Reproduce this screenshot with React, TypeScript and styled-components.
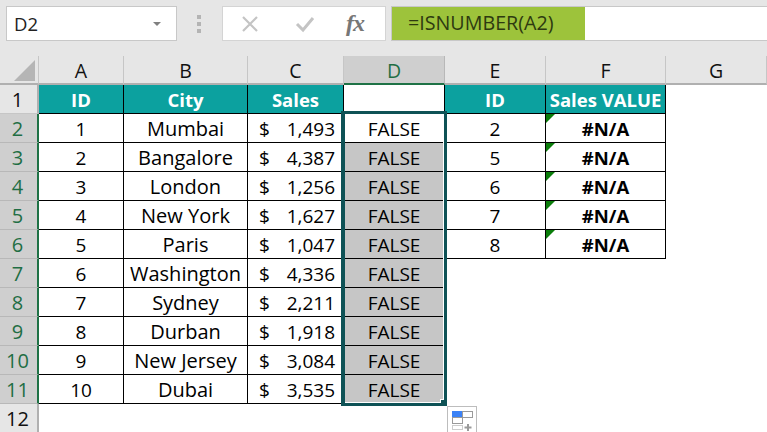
import React from "react";
import styled, { createGlobalStyle } from "styled-components";

const Global = createGlobalStyle`
  html, body { margin: 0; padding: 0; background: #fff; overflow: hidden; }
  #root { width: 767px; height: 432px; overflow: hidden; }
  * { box-sizing: border-box; }
`;
const FONT = `"Open Sans", Lato, "Liberation Sans", sans-serif`;

const Page = styled.div`
  width: 767px; height: 432px; display: flex; flex-direction: column;
  font-family: ${FONT}; color: #000; background: #fff;
`;
const FormulaBar = styled.div`
  height: 56px; flex: none; background: #e6e6e6; display: flex; align-items: flex-start;
  padding-top: 6px; padding-left: 6px;
`;
const NameBox = styled.div`
  width: 171px; height: 35px; background: #fff; border: 1px solid #c8c8c8;
  display: flex; align-items: center; justify-content: space-between;
  padding: 0 15px 0 7px; font-size: 18.5px; color: #222;
`;
const Caret = styled.span`
  width: 0; height: 0; border-left: 4px solid transparent; border-right: 4px solid transparent;
  border-top: 4px solid #808080;
`;
const Grip = styled.div`
  width: 45px; height: 35px; flex: none; display: flex; flex-direction: column; align-items: center;
  justify-content: center; gap: 3px; padding-right: 1px;
`;
const GripDot = styled.span`
  width: 4px; height: 4px; background: #b4b4b4;
`;
const ButtonBox = styled.div`
  width: 164px; height: 35px; flex: none; background: #fff; border: 1px solid #d4d4d4;
  display: flex; align-items: center; padding-left: 18px; gap: 36px;
`;
const FxLabel = styled.span`
  font-family: "Liberation Serif", serif; font-style: italic; font-weight: 700; font-size: 24px; color: #777;
  letter-spacing: -1px; margin-left: -5px;
`;
const FormulaInput = styled.div`
  flex: 1; height: 35px; margin-left: 5px; background: #fff; border: 1px solid #c8c8c8; border-right: none; display: flex;
`;
const FormulaText = styled.div`
  width: 193px; height: 100%; background: #9dc33b; padding-left: 16px; font-size: 19.7px; line-height: 32px; color: #2e3a10;
`;
const Sheet = styled.div`
  position: relative; display: grid; flex: none;
  grid-template-columns: 39px 85px 124px 96px 101px 101px 120px 101px;
  grid-template-rows: 29px repeat(12, 29px);
`;
const Corner = styled.div`
  background: #e6e6e6; border-right: 1px solid #c6c6c6; border-bottom: 2px solid #b0b0b0; position: relative;
`;
const CornerMark = styled.svg`
  position: absolute; right: 3px; bottom: 2px; width: 21px; height: 21px;
`;
const ColHead = styled.div<{ $active?: boolean }>`
  background: ${p => (p.$active ? "#cfcfcf" : "#e6e6e6")};
  border-right: 1px solid ${p => (p.$active ? "#b8b8b8" : "#c6c6c6")};
  border-bottom: 2px solid ${p => (p.$active ? "#1f7246" : "#b0b0b0")};
  color: ${p => (p.$active ? "#1f6e44" : "#111")};
  display: flex; align-items: center; justify-content: center; font-size: 19.5px; padding-top: 2px;
`;
const RowHead = styled.div<{ $active?: boolean }>`
  background: ${p => (p.$active ? "#cfcfcf" : "#e6e6e6")};
  border-right: 2px solid ${p => (p.$active ? "#1f7246" : "#b0b0b0")};
  border-bottom: 1px solid ${p => (p.$active ? "#b8b8b8" : "#c6c6c6")};
  color: ${p => (p.$active ? "#1f6e44" : "#111")};
  display: flex; align-items: center; justify-content: center; font-size: 20px; padding: 1px 2px 0 0;
`;
const Header = styled.div`
  background: #0ca19f; color: #fff; font-weight: 700; font-size: 18.5px;
  border-right: 1px solid #000; border-bottom: 1px solid #000;
  display: flex; align-items: center; justify-content: center; white-space: nowrap;
`;
const Cell = styled.div<{ $grey?: boolean }>`
  position: relative; background: ${p => (p.$grey ? "#c6c6c6" : "#fff")};
  font-size: 19px; padding-top: 1px;
  border-right: 1px solid #000; border-bottom: 1px solid #000;
  display: flex; align-items: center; justify-content: center; white-space: nowrap;
`;
const CityCell = styled(Cell)`
  font-size: 20px;
`;
const ErrorCell = styled(Cell)`
  font-size: 18.5px; font-weight: 700;
`;
const Money = styled(Cell)`
  justify-content: space-between; padding: 1px 8px 0 11px;
`;
const Flag = styled.span`
  position: absolute; left: 0; top: 0; width: 0; height: 0;
  border-top: 9px solid #0a7d0a; border-right: 9px solid transparent;
`;
const Blank = styled.div``;
const Selection = styled.div`
  position: absolute; left: 341px; top: 55px; width: 106px; height: 295px;
  border-style: solid; border-color: #0e5256; border-width: 3px 3px 3px 4px;
  box-shadow: inset -1px -1px 0 #fff; pointer-events: none;
`;
const FillHandle = styled.span`
  position: absolute; right: -1px; bottom: -1px; width: 4px; height: 4px; background: #0e5256;
  box-shadow: -1px -1px 0 #fff;
`;
const PasteOptions = styled.div`
  position: absolute; left: 447px; top: 350px; width: 30px; height: 30px; background: #fff;
  border: 1px solid #bdbdbd; padding: 4px;
`;

const cities = ["Mumbai","Bangalore","London","New York","Paris","Washington","Sydney","Durban","New Jersey","Dubai"];
const sales = ["1,493","4,387","1,256","1,627","1,047","4,336","2,211","1,918","3,084","3,535"];
const lookups = ["2","5","6","7","8"];
const cols = ["A","B","C","D","E","F","G"];

export default function App() {
  return (
    <Page>
      <Global />
      <FormulaBar>
        <NameBox>D2<Caret /></NameBox>
        <Grip><GripDot /><GripDot /><GripDot /></Grip>
        <ButtonBox>
          <svg width="18" height="18" viewBox="0 0 18 18"><path d="M2 2 L16 16 M16 2 L2 16" stroke="#c4c4c4" strokeWidth="2.2" fill="none" /></svg>
          <svg width="20" height="18" viewBox="0 0 20 18"><path d="M2 9 L8 15 L18 3" stroke="#c4c4c4" strokeWidth="3" fill="none" /></svg>
          <FxLabel>fx</FxLabel>
        </ButtonBox>
        <FormulaInput><FormulaText>=ISNUMBER(A2)</FormulaText></FormulaInput>
      </FormulaBar>
      <Sheet>
        <Corner>
          <CornerMark viewBox="0 0 21 21"><path d="M21 0 V21 H0 Z" fill="#b5b5b5" /></CornerMark>
        </Corner>
        {cols.map(c => <ColHead key={c} $active={c === "D"}>{c}</ColHead>)}

        <RowHead>1</RowHead>
        <Header>ID</Header><Header>City</Header><Header>Sales</Header>
        <Cell />
        <Header>ID</Header><Header>Sales VALUE</Header>
        <Blank />

        {cities.map((city, i) => (
          <React.Fragment key={city}>
            <RowHead $active>{i + 2}</RowHead>
            <Cell>{i + 1}</Cell>
            <CityCell>{city}</CityCell>
            <Money><span>$</span><span>{sales[i]}</span></Money>
            <Cell $grey={i > 0}>FALSE</Cell>
            {i < 5 ? (
              <>
                <Cell>{lookups[i]}</Cell>
                <ErrorCell><Flag />#N/A</ErrorCell>
              </>
            ) : (<><Blank /><Blank /></>)}
            <Blank />
          </React.Fragment>
        ))}

        <RowHead>12</RowHead>

        <Selection><FillHandle /></Selection>
        <PasteOptions>
          <svg width="22" height="24" viewBox="0 0 22 24">
            <rect x="0.5" y="0.5" width="10" height="6" fill="#3b82f6" stroke="#3b82f6" />
            <rect x="10.5" y="0.5" width="10" height="6" fill="#fff" stroke="#9a9a9a" />
            <rect x="0.5" y="6.5" width="10" height="6" fill="#fff" stroke="#9a9a9a" />
            <path d="M0.5 14.5 H10.5 V18.5 H0.5 Z" fill="none" stroke="#9a9a9a" strokeDasharray="1 1" />
            <path d="M16 13 V20 M12.5 16.5 H19.5" stroke="#9a9a9a" strokeWidth="2" />
          </svg>
        </PasteOptions>
      </Sheet>
    </Page>
  );
}
